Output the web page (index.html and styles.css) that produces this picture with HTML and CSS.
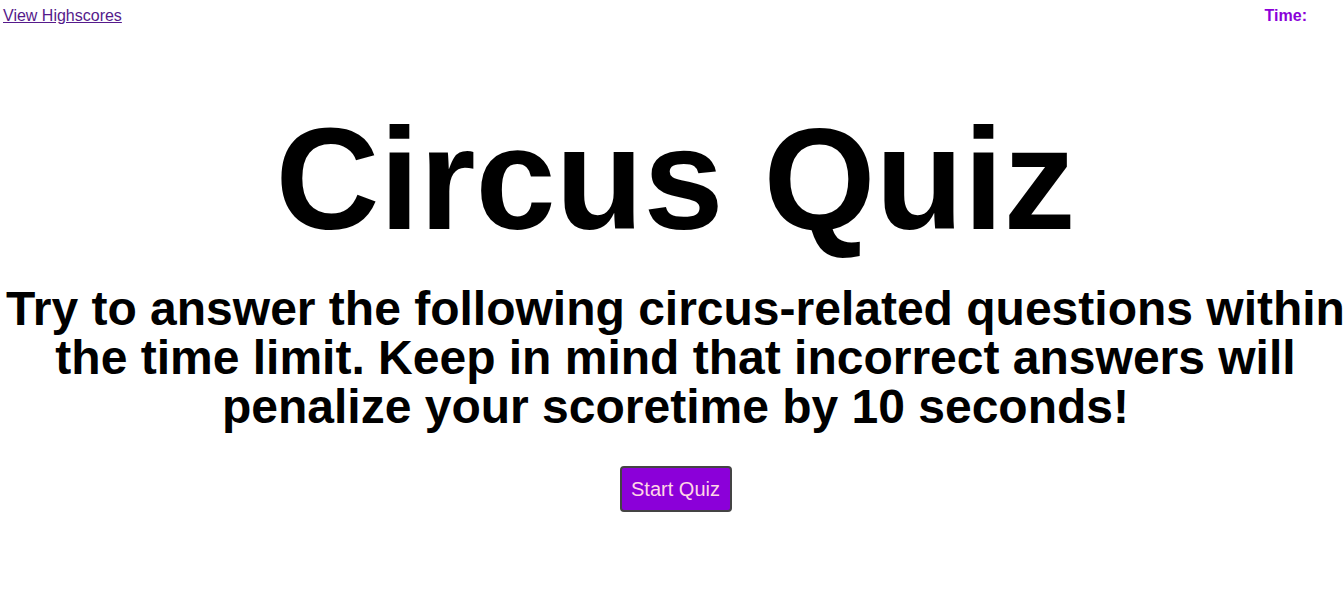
FILE: index.html
```html
<!DOCTYPE html>
<html>
<head>
<meta charset="utf-8">
<link rel="stylesheet" href="styles.css">
</head>
<body>
<header class="topbar">
  <a class="scores-link" href="#">View Highscores</a>
  <div class="timer">Time: <span class="time-value"></span></div>
</header>
<main class="intro">
  <h1 class="title">Circus Quiz</h1>
  <h2 class="subtitle">Try to answer the following circus-related questions within the time limit. Keep in mind that incorrect answers will penalize your scoretime by 10 seconds!</h2>
  <button class="start-btn">Start Quiz</button>
</main>
</body>
</html>
```
FILE: styles.css
```css
html, body {
  margin: 0;
  padding: 0;
  background: #fff;
  font-family: "Liberation Sans", Arial, Helvetica, sans-serif;
}
.topbar {
  display: flex;
  justify-content: space-between;
  align-items: flex-start;
  padding: 7px 36px 0 3px;
  font-size: 16px;
  line-height: 18px;
}
.scores-link {
  color: #551a8b;
  text-decoration: underline;
}
.timer {
  color: #8b00d9;
  font-weight: bold;
}
.intro {
  display: flex;
  flex-direction: column;
  align-items: center;
  text-align: center;
  padding-left: 8px;
}
.title {
  font-size: 144px;
  line-height: 166px;
  margin: 72px 0 0 0;
  font-weight: bold;
}
.subtitle {
  font-size: 48px;
  line-height: 49px;
  margin: 21px -6px 0 -6px;
  font-weight: bold;
}
.start-btn {
  margin-top: 35px;
  width: 112px;
  height: 46px;
  background: #8b00d9;
  color: #ffd6e6;
  font-family: "Liberation Sans", Arial, sans-serif;
  font-size: 20px;
  border: 2px solid #444;
  border-radius: 4px;
  padding: 0;
}
```
